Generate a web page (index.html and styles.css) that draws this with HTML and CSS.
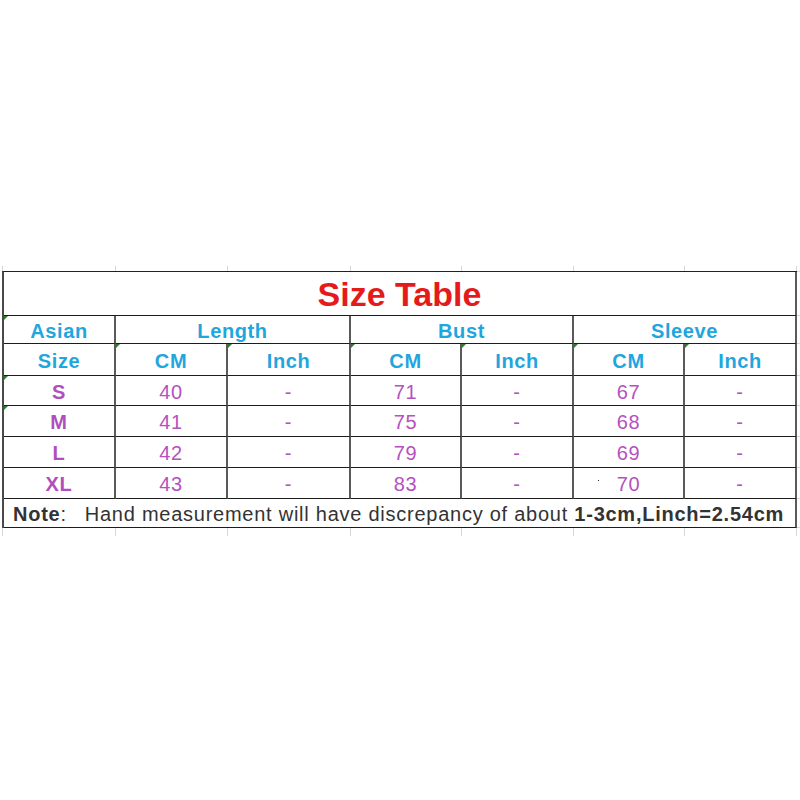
FILE: index.html
```html
<!DOCTYPE html>
<html>
<head>
<meta charset="utf-8">
<link rel="stylesheet" href="styles.css">
</head>
<body>
<div class="page">
  <div class="ticks">
    <span></span><span></span><span></span><span></span><span></span><span></span><span></span>
  </div>
  <div class="sheet">
    <div class="table">
      <div class="cell title span7">Size Table</div>

      <div class="cell hd mark">Asian</div>
      <div class="cell hd span2">Length</div>
      <div class="cell hd span2">Bust</div>
      <div class="cell hd span2">Sleeve</div>

      <div class="cell hd">Size</div>
      <div class="cell hd mark">CM</div>
      <div class="cell hd mark">Inch</div>
      <div class="cell hd mark">CM</div>
      <div class="cell hd mark">Inch</div>
      <div class="cell hd mark">CM</div>
      <div class="cell hd mark">Inch</div>

      <div class="cell sz mark">S</div>
      <div class="cell val">40</div><div class="cell val">-</div>
      <div class="cell val">71</div><div class="cell val">-</div>
      <div class="cell val">67</div><div class="cell val">-</div>

      <div class="cell sz mark">M</div>
      <div class="cell val">41</div><div class="cell val">-</div>
      <div class="cell val">75</div><div class="cell val">-</div>
      <div class="cell val">68</div><div class="cell val">-</div>

      <div class="cell sz">L</div>
      <div class="cell val">42</div><div class="cell val">-</div>
      <div class="cell val">79</div><div class="cell val">-</div>
      <div class="cell val">69</div><div class="cell val">-</div>

      <div class="cell sz">XL</div>
      <div class="cell val">43</div><div class="cell val">-</div>
      <div class="cell val">83</div><div class="cell val">-</div>
      <div class="cell val dot">70</div><div class="cell val">-</div>

      <div class="cell note span7"><span class="line"><b>Note</b>:<span class="gap">Hand measurement will have discrepancy of about </span><b>1-3cm,Linch=2.54cm</b></span></div>
    </div>
    <div class="rstrip">
      <span></span><span></span><span></span><span></span><span></span><span></span><span></span><span></span>
    </div>
  </div>
  <div class="ticks low">
    <span></span><span></span><span></span><span></span><span></span><span></span><span></span>
  </div>
</div>
</body>
</html>
```

FILE: styles.css
```css
html, body {
  margin: 0;
  padding: 0;
  background: #ffffff;
}

body {
  font-family: "Liberation Sans", Arial, sans-serif;
}

.page {
  width: 800px;
  height: 800px;
  padding-top: 266px;
  padding-left: 2px;
  box-sizing: border-box;
}

.ticks {
  display: grid;
  grid-template-columns: 114px 112px 123px 111px 112px 111px 112px;
  height: 5px;
  width: 795px;
}

.ticks span {
  border-right: 1px solid #d6d6d6;
}

.ticks span:first-child {
  border-left: 1px solid #d6d6d6;
}

.ticks.low {
  height: 8px;
}

.sheet {
  display: flex;
}

.table {
  display: grid;
  grid-template-columns: 112px 112px 123px 111px 112px 111px 112px;
  grid-template-rows: 44px 28px 32px 30px 31px 31px 31px 29px;
  border-top: 1px solid #222;
  border-left: 2px solid #4a4a4a;
  width: 793px;
}

.cell {
  position: relative;
  box-sizing: border-box;
  border-right: 2px solid #5a5a5a;
  border-bottom: 1px solid #1c1c1c;
  display: flex;
  align-items: center;
  justify-content: center;
  padding-top: 3px;
  font-size: 20px;
  letter-spacing: 0.6px;
  white-space: nowrap;
}

.span2 {
  grid-column: span 2;
}

.span7 {
  grid-column: span 7;
}

.title {
  color: #e51b1b;
  font-weight: bold;
  font-size: 34px;
  letter-spacing: 0;
  padding-top: 2px;
}

.hd {
  color: #1fa6de;
  font-weight: bold;
}

.sz {
  color: #b04fbc;
  font-weight: bold;
}

.val {
  color: #b551c0;
}

.mark::before {
  content: "";
  position: absolute;
  top: 0;
  left: 0;
  border-top: 4px solid #2f7d32;
  border-right: 4px solid transparent;
}

.dot::after {
  content: "";
  position: absolute;
  left: 24px;
  top: 12px;
  width: 1px;
  height: 1px;
  background: #222;
}

.note {
  justify-content: flex-start;
  padding-left: 9px;
  color: #333333;
  letter-spacing: 0.75px;
  padding-top: 2px;
}

.note .gap {
  margin-left: 18px;
}

.rstrip {
  display: grid;
  grid-template-rows: 44px 28px 32px 30px 31px 31px 31px 29px;
  width: 4px;
  border-top: 1px solid #d6d6d6;
}

.rstrip span {
  border-bottom: 1px solid #d6d6d6;
}
```
